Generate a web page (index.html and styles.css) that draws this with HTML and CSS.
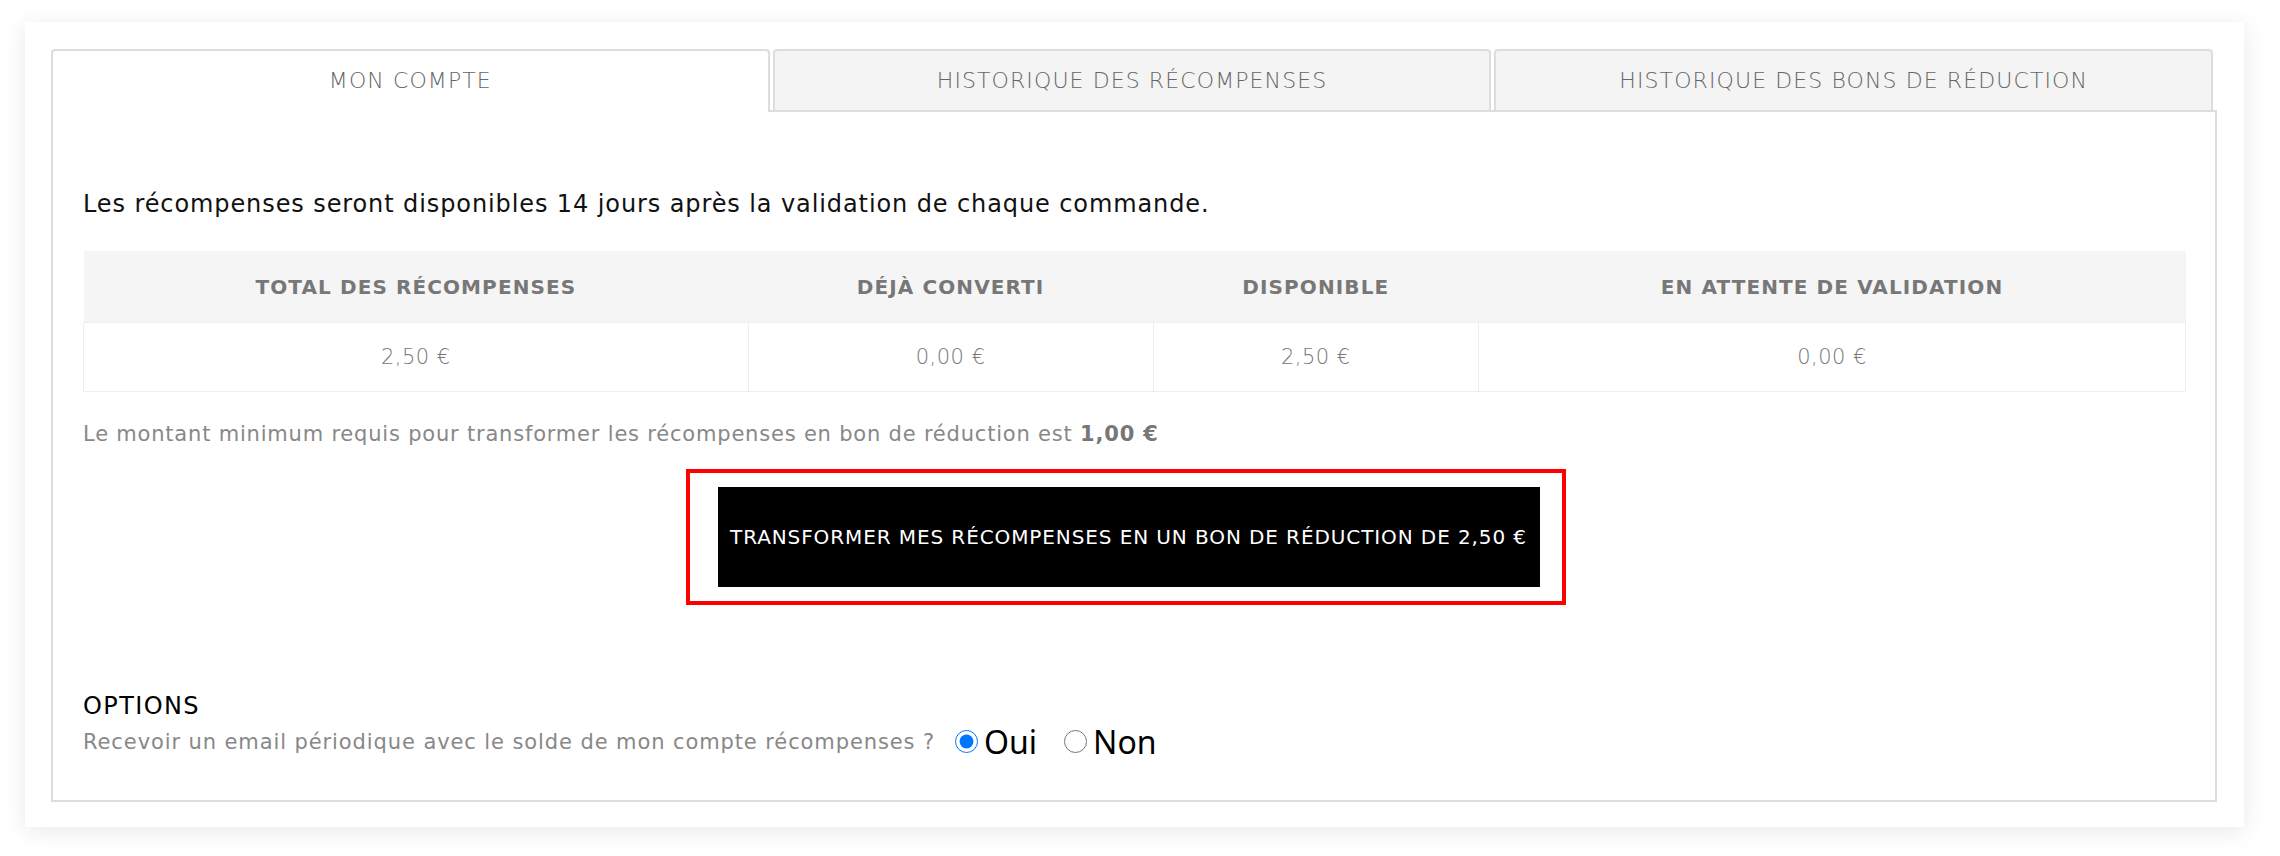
FILE: index.html
```html
<!DOCTYPE html>
<html>
  <head>
    <meta charset="UTF-8" />
    <meta name="viewport" content="width=device-width, initial-scale=1.0" />
    <title>Mon compte récompenses</title>
    <link rel="stylesheet" href="styles.css">
  </head>
  <body>
    <div class="card">
      <ul class="tabs">
        <li class="tab active">MON COMPTE</li>
        <li class="tab">HISTORIQUE DES RÉCOMPENSES</li>
        <li class="tab">HISTORIQUE DES BONS DE RÉDUCTION</li>
      </ul>
      <div class="panel">
        <p class="intro">Les récompenses seront disponibles 14 jours après la validation de chaque commande.</p>
        <table class="rewards">
          <thead>
            <tr>
              <th>TOTAL DES RÉCOMPENSES</th>
              <th>DÉJÀ CONVERTI</th>
              <th>DISPONIBLE</th>
              <th>EN ATTENTE DE VALIDATION</th>
            </tr>
          </thead>
          <tbody>
            <tr>
              <td>2,50 €</td>
              <td>0,00 €</td>
              <td>2,50 €</td>
              <td>0,00 €</td>
            </tr>
          </tbody>
        </table>
        <p class="minimum">Le montant minimum requis pour transformer les récompenses en bon de réduction est <b>1,00 €</b></p>
        <div class="convert">
          <div class="highlight">
            <button type="button">TRANSFORMER MES RÉCOMPENSES EN UN BON DE RÉDUCTION DE 2,50 €</button>
          </div>
        </div>
        <h4 class="options-title">OPTIONS</h4>
        <form class="options">
          <span class="question">Recevoir un email périodique avec le solde de mon compte récompenses ?</span>
          <label class="choice"><input type="radio" name="email" value="1" checked />Oui</label>
          <label class="choice"><input type="radio" name="email" value="0" />Non</label>
        </form>
      </div>
    </div>
  </body>
</html>
```

FILE: styles.css
```css
body {
  margin: 0;
  padding: 22px 36px 29px 25px;
  background-color: #fff;
  font-family: "DejaVu Sans", Inter, Arial, sans-serif;
}
.card {
  background-color: #fff;
  padding: 27px 27px 25px 26px;
  box-shadow: 0 4px 22px rgba(0, 0, 0, 0.09);
}
.tabs {
  display: flex;
  gap: 3px;
  list-style: none;
  margin: 0;
  padding: 0;
}
.tab {
  flex: 1;
  height: 59px;
  line-height: 59px;
  text-align: center;
  font-size: 22px;
  font-weight: 200;
  letter-spacing: 1.1px;
  color: #666;
  background-color: #f4f4f4;
  border: 2px solid #ddd;
  border-bottom: none;
  border-radius: 4px 4px 0 0;
}
.tab.active {
  background-color: #fff;
  height: 61px;
  margin-bottom: -2px;
}
.tab:last-child {
  margin-right: 4px;
}
.panel {
  border: 2px solid #ddd;
  padding: 0 29px 37px 30px;
}
.intro {
  margin: 77px 0 0;
  font-size: 24px;
  letter-spacing: 0.9px;
  line-height: 30px;
  color: #111;
}
.rewards {
  width: 100%;
  margin-top: 32px;
  border-collapse: collapse;
}
.rewards th {
  background-color: #f5f5f5;
  color: #777;
  font-size: 20px;
  font-weight: 700;
  letter-spacing: 1.1px;
  height: 71px;
  padding: 0 10px;
}
.rewards td {
  border: 1px solid #eee;
  text-align: center;
  color: #777;
  font-size: 21px;
  font-weight: 200;
  letter-spacing: 0.5px;
  height: 68px;
  padding: 0 10px;
}
.minimum {
  margin: 29px 0 0;
  font-size: 21px;
  letter-spacing: 0.8px;
  line-height: 26px;
  color: #888;
}
.minimum b {
  color: #777;
}
.convert {
  display: flex;
  justify-content: center;
  margin-top: 22px;
}
.highlight {
  border: 4px solid #f00;
  padding: 14px 22px 14px 28px;
  margin-right: 18px;
}
.highlight button {
  display: block;
  background-color: #000;
  color: #fff;
  border: none;
  border-radius: 0;
  font-family: inherit;
  font-size: 20px;
  font-weight: 400;
  letter-spacing: 0.9px;
  width: 822px;
  height: 100px;
  padding: 0;
  cursor: pointer;
}
.options-title {
  margin: 87px 0 0;
  font-size: 24px;
  font-weight: 400;
  letter-spacing: 1.4px;
  line-height: 28px;
  color: #000;
}
.options {
  display: flex;
  align-items: center;
  margin-top: 0;
}
.question {
  font-size: 21px;
  letter-spacing: 0.9px;
  color: #888;
  margin-right: 20px;
}
.choice {
  display: flex;
  align-items: center;
  font-family: "Noto Sans", sans-serif;
  font-size: 32px;
  color: #000;
  margin-right: 27px;
}
.choice input {
  width: 23px;
  height: 23px;
  margin: 0 6px 0 0;
}
```
